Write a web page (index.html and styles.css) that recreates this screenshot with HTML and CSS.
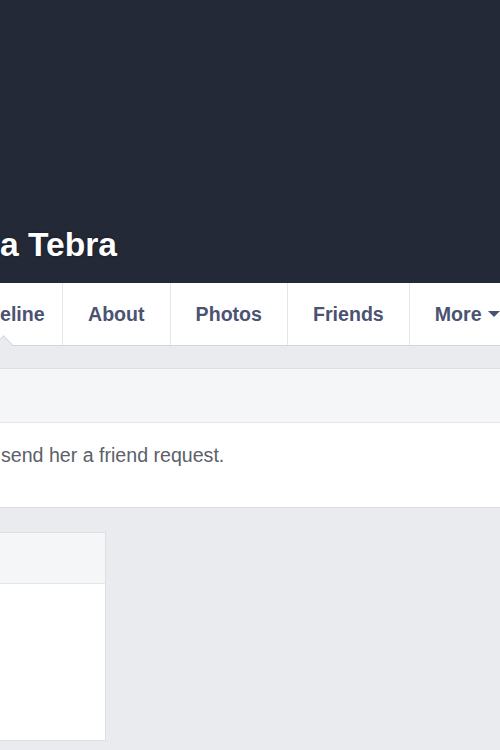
FILE: index.html
```html
<!DOCTYPE html>
<html>
<head>
<meta charset="utf-8">
<link rel="stylesheet" href="styles.css">
</head>
<body>
<header class="cover">
  <h1 class="name">a Tebra</h1>
</header>
<nav class="tabs">
  <a class="tab tab-active">eline</a>
  <a class="tab">About</a>
  <a class="tab">Photos</a>
  <a class="tab">Friends</a>
  <a class="tab tab-more">More <span class="caret"></span></a>
</nav>
<main class="content">
  <section class="notice">
    <div class="notice-head"></div>
    <div class="notice-body">send her a friend request.</div>
  </section>
  <section class="card">
    <div class="card-head"></div>
    <div class="card-body"></div>
  </section>
</main>
</body>
</html>
```
FILE: styles.css
```css
html, body {
  margin: 0;
  padding: 0;
}
body {
  background: #e9ebee;
  font-family: "Liberation Sans", Arial, sans-serif;
  overflow: hidden;
  width: 500px;
  height: 750px;
}
.cover {
  height: 283px;
  background: #242937;
  display: flex;
  align-items: flex-end;
  padding-bottom: 18px;
  box-sizing: border-box;
}
.name {
  margin: 0;
  color: #ffffff;
  font-size: 33.6px;
  line-height: 40px;
  font-weight: bold;
  text-shadow: 0 0 3px rgba(0,0,0,0.4);
}
.tabs {
  height: 62px;
  background: #ffffff;
  border-bottom: 1px solid #d3d6db;
  display: flex;
  align-items: stretch;
  white-space: nowrap;
}
.tab {
  position: relative;
  display: flex;
  align-items: center;
  padding: 0 25px;
  border-right: 1px solid #e3e5e8;
  color: #4b5372;
  font-weight: bold;
  font-size: 19.6px;
  flex: none;
}
.tab-active {
  padding-left: 0;
  width: 45px;
  padding-right: 17px;
}
.tab-active::after {
  content: "";
  position: absolute;
  left: -3px;
  top: 55px;
  width: 12px;
  height: 12px;
  background: #e9ebee;
  border-top: 1px solid #d6d9de;
  border-left: 1px solid #d6d9de;
  transform: rotate(45deg);
  z-index: 2;
}
.tab-more {
  border-right: none;
  padding-right: 0;
}
.caret {
  display: inline-block;
  margin-left: 6px;
  width: 0;
  height: 0;
  border-left: 6px solid transparent;
  border-right: 6px solid transparent;
  border-top: 6px solid #4b5372;
}
.content {
  padding-top: 22px;
  display: flex;
  flex-direction: column;
  gap: 24px;
}
.notice {
  margin-left: -10px;
  margin-right: -10px;
  background: #ffffff;
  border: 1px solid #dddfe2;
}
.notice-head {
  height: 53px;
  background: #f5f6f7;
  border-bottom: 1px solid #e5e6e9;
}
.notice-body {
  height: 84px;
  box-sizing: border-box;
  padding: 20px 0 0 10px;
  font-size: 19.6px;
  line-height: 24px;
  color: #5b606b;
}
.card {
  margin-left: -10px;
  width: 116px;
  box-sizing: border-box;
  background: #ffffff;
  border: 1px solid #dddfe2;
}
.card-head {
  height: 50px;
  background: #f5f6f7;
  border-bottom: 1px solid #e5e6e9;
}
.card-body {
  height: 156px;
}
```
